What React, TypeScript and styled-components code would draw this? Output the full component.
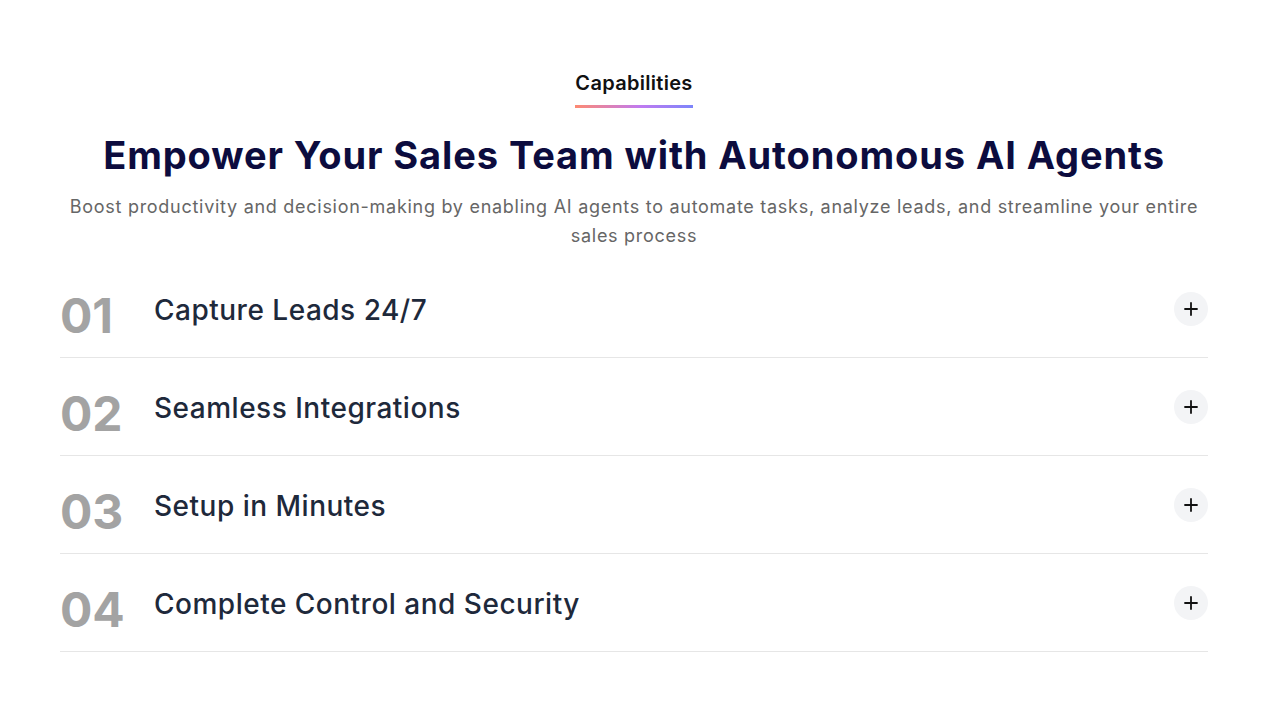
import React from 'react';
import styled, {createGlobalStyle} from 'styled-components';

const GlobalStyle = createGlobalStyle`
    body {
        margin: 0;
        background: #ffffff;
        font-family: Inter, "Open Sans", "Liberation Sans", sans-serif;
    }
`;

const Section = styled.section`
    width: 1148px;
    margin-left: 60px;
    padding-top: 71px;
    display: flex;
    flex-direction: column;
    align-items: center;
`;

const Eyebrow = styled.div`
    font-size: 20px;
    line-height: 24px;
    font-weight: 600;
    color: #111111;
    letter-spacing: 0.3px;
    padding-bottom: 10px;
    border-bottom: 3px solid transparent;
    border-image: linear-gradient(90deg, #fe8a70 0%, #c07af0 55%, #7b85fb 100%) 1;
`;

const Title = styled.h2`
    margin: 24px 0 0;
    font-size: 38px;
    line-height: 46px;
    font-weight: 700;
    letter-spacing: 0.9px;
    color: #0c0c3e;
    text-align: center;
`;

const Lead = styled.p`
    margin: 14px 0 0;
    font-size: 18px;
    line-height: 29px;
    letter-spacing: 0.72px;
    color: #666666;
    text-align: center;
`;

const List = styled.div`
    align-self: stretch;
    margin-top: 10px;
    display: flex;
    flex-direction: column;
`;

const Row = styled.div`
    height: 97px;
    display: flex;
    align-items: center;
    border-bottom: 1px solid #e6e6e6;
`;

const Index = styled.span`
    width: 94px;
    font-size: 48px;
    font-weight: 700;
    color: #a3a3a3;
    padding-top: 14px;
`;

const RowTitle = styled.span`
    flex: 1;
    font-size: 28px;
    font-weight: 500;
    letter-spacing: 0.5px;
    color: #1e293b;
    padding-top: 2px;
`;

const PlusButton = styled.button`
    width: 34px;
    height: 34px;
    border: none;
    border-radius: 50%;
    background: #f3f4f6;
    display: flex;
    align-items: center;
    justify-content: center;
    padding: 0;
    cursor: pointer;
`;

const items = [
    'Capture Leads 24/7',
    'Seamless Integrations',
    'Setup in Minutes',
    'Complete Control and Security',
];

export default function App() {
    return (
        <>
            <GlobalStyle />
            <Section>
                <Eyebrow>Capabilities</Eyebrow>
                <Title>Empower Your Sales Team with Autonomous AI Agents</Title>
                <Lead>
                    Boost productivity and decision-making by enabling AI agents to automate tasks, analyze leads, and streamline your entire sales process
                </Lead>
                <List>
                    {items.map((item, i) => (
                        <Row key={item}>
                            <Index>{String(i + 1).padStart(2, '0')}</Index>
                            <RowTitle>{item}</RowTitle>
                            <PlusButton aria-label='Expand'>
                                <svg width='16' height='16' viewBox='0 0 16 16'>
                                    <path d='M8 2v12M2 8h12' stroke='#111' strokeWidth='1.8' strokeLinecap='round'/>
                                </svg>
                            </PlusButton>
                        </Row>
                    ))}
                </List>
            </Section>
        </>
    );
}
